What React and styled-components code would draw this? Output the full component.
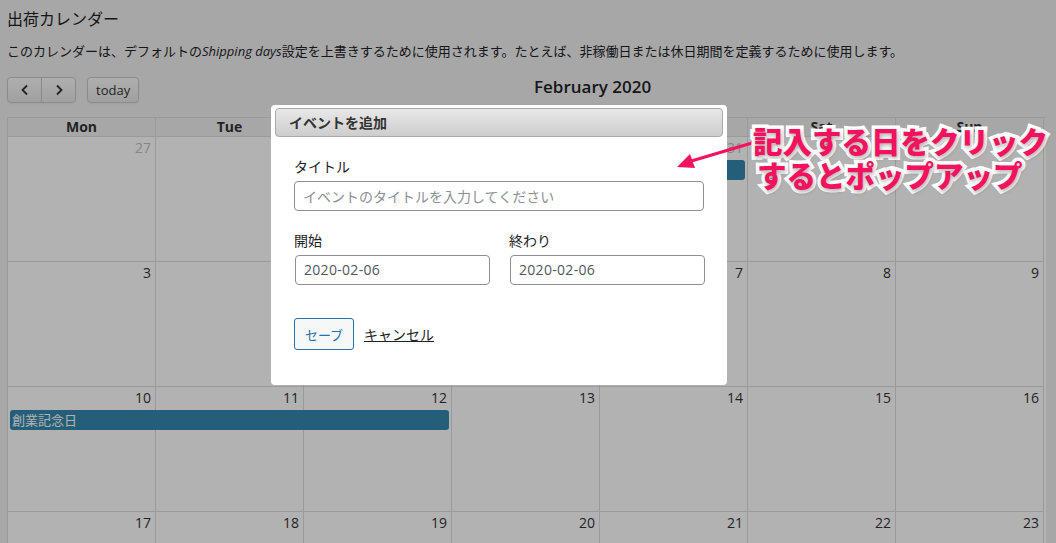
import styled, { createGlobalStyle } from "styled-components";

const GlobalStyle = createGlobalStyle`
  html, body {
    margin: 0;
    padding: 0;
    background: #f0f0f0;
    font-family: "Open Sans", "Noto Sans CJK JP", sans-serif;
    color: #1d2327;
  }
`;

const Page = styled.div`
  position: relative;
  width: 1056px;
  height: 543px;
  overflow: hidden;
  padding: 0 10px 0 7px;
  box-sizing: border-box;
`;

const Heading = styled.h1`
  margin: 0;
  padding-top: 7px;
  font-size: 16px;
  font-weight: 400;
  line-height: 22px;
  font-family: "Noto Sans CJK JP", sans-serif;
`;

const Intro = styled.p`
  margin: 12px 0 0;
  font-size: 13px;
  line-height: 20px;
  font-family: "Noto Sans CJK JP", sans-serif;

  em {
    font-family: "Open Sans", sans-serif;
    font-style: italic;
  }
`;

const Toolbar = styled.div`
  display: flex;
  align-items: center;
  margin-top: 16px;
  height: 26px;
`;

const ButtonGroup = styled.div`
  display: flex;
  margin-right: 11px;
`;

const ToolButton = styled.button`
  height: 26px;
  min-width: ${(p) => (p.$wide ? "51px" : "35px")};
  padding: 0 8px;
  display: flex;
  align-items: center;
  justify-content: center;
  font-family: "Open Sans", sans-serif;
  font-size: 13px;
  color: #333;
  background: linear-gradient(#fafafa, #e6e6e6);
  border: 1px solid #c8c8c8;
  border-radius: ${(p) => p.$radius || "4px"};
  margin-left: ${(p) => (p.$joined ? "-1px" : "0")};
  box-shadow: inset 0 1px 0 rgba(255, 255, 255, 0.4), 0 1px 2px rgba(0, 0, 0, 0.05);
`;

const MonthTitle = styled.h2`
  flex: 1;
  margin: 0;
  text-align: center;
  font-size: 17px;
  font-weight: 600;
  color: #1d2327;
  margin-top: -7px;
`;

const Calendar = styled.div`
  margin-top: 14px;
  width: 1038px;
  border-left: 1px solid #ddd;
  border-top: 1px solid #ddd;
`;

const HeaderRow = styled.div`
  display: grid;
  grid-template-columns: repeat(7, 148px);
  height: 19px;
`;

const HeaderCell = styled.div`
  border-right: 1px solid #ddd;
  border-bottom: 1px solid #ddd;
  text-align: center;
  font-size: 14px;
  font-weight: 700;
  line-height: 18px;
  color: #333;
`;

const WeekRow = styled.div`
  display: grid;
  grid-template-columns: repeat(7, 148px);
  grid-template-rows: 23px 20px 1fr;
  height: 125px;
  background: #fff;
`;

const DayCell = styled.div`
  grid-row: 1 / -1;
  grid-column: ${(p) => p.$col};
  border-right: 1px solid #ddd;
  border-bottom: 1px solid #ddd;
  text-align: right;
  padding: 1px 4px 0 0;
  font-size: 14px;
  line-height: 20px;
  color: ${(p) => (p.$other ? "#c2c2c2" : "#333")};
`;

const EventBar = styled.div`
  grid-row: 2;
  grid-column: ${(p) => p.$start} / span ${(p) => p.$span};
  margin: 0 3px 0 2px;
  background: #3687ac;
  border-radius: 3px;
  color: #fff;
  font-size: 13px;
  line-height: 19px;
  padding-left: 2px;
  z-index: 1;
  font-family: "Noto Sans CJK JP", sans-serif;
  white-space: nowrap;
  overflow: hidden;
`;

const Shade = styled.div`
  position: absolute;
  inset: 0;
  background: rgba(0, 0, 0, 0.3);
  z-index: 10;
`;

const Modal = styled.div`
  position: absolute;
  left: 271px;
  top: 105px;
  width: 456px;
  height: 280px;
  box-sizing: border-box;
  background: #fff;
  border-radius: 4px;
  padding: 3px 4px;
  z-index: 20;
  font-family: "Noto Sans CJK JP", sans-serif;
`;

const ModalBar = styled.div`
  height: 29px;
  box-sizing: border-box;
  border: 1px solid #aaa;
  border-radius: 4px;
  background: linear-gradient(#e8e8e8, #cdcdcd);
  padding-left: 13px;
  font-size: 14px;
  font-weight: 700;
  line-height: 27px;
  color: #333;
`;

const ModalBody = styled.div`
  padding: 19px 19px 0;
`;

const Label = styled.label`
  display: block;
  font-size: 14px;
  line-height: 20px;
  color: #1d2327;
`;

const TextInput = styled.div`
  box-sizing: border-box;
  width: ${(p) => p.$width || "410px"};
  height: 30px;
  margin-top: 5px;
  margin-left: ${(p) => p.$inset || "0"};
  border: 1px solid #8c8f94;
  border-radius: 4px;
  padding: 0 8px;
  font-size: 14px;
  line-height: 28px;
  color: ${(p) => (p.$placeholder ? "#8c8f94" : "#50575e")};
  font-family: ${(p) =>
    p.$placeholder ? '"Noto Sans CJK JP", sans-serif' : '"Open Sans", sans-serif'};
  letter-spacing: ${(p) => (p.$placeholder ? "0" : "0.3px")};
`;

const DateGrid = styled.div`
  display: grid;
  grid-template-columns: 195px 195px;
  column-gap: 20px;
  margin-top: 19px;
`;

const Actions = styled.div`
  display: flex;
  align-items: center;
  gap: 10px;
  margin-top: 33px;
`;

const SaveButton = styled.button`
  height: 32px;
  width: 60px;
  border: 1px solid #2271b1;
  border-radius: 3px;
  background: #f6f7f7;
  color: #2271b1;
  font-size: 13px;
  font-family: "Noto Sans CJK JP", sans-serif;
`;

const CancelLink = styled.a`
  color: #1d2327;
  font-size: 14px;
  text-decoration: underline;
`;

const Callout = styled.div`
  position: absolute;
  left: 753px;
  top: 123px;
  z-index: 30;
  font-family: "Noto Sans CJK JP", sans-serif;
  font-size: 29.5px;
  font-weight: 900;
  line-height: 34px;
  color: #f2125e;
  -webkit-text-stroke: 7px #fff;
  paint-order: stroke fill;
  text-shadow: 1px 2px 4px rgba(0, 0, 0, 0.35);
  white-space: nowrap;
`;

const CalloutLine = styled.div`
  padding-left: ${(p) => p.$indent || "0"};
`;

const Arrow = styled.svg`
  position: absolute;
  left: 670px;
  top: 135px;
  z-index: 30;
`;

const Chevron = ({ dir }) => (
  <svg width="10" height="12" viewBox="0 0 10 12">
    <polyline
      points={dir === "left" ? "7,1.5 2.5,6 7,10.5" : "3,1.5 7.5,6 3,10.5"}
      fill="none"
      stroke="#333"
      strokeWidth="1.8"
    />
  </svg>
);

const dayNames = ["Mon", "Tue", "Wed", "Thu", "Fri", "Sat", "Sun"];

const weeks = [
  {
    days: [27, 28, 29, 30, 31, 1, 2],
    other: [true, true, true, true, true, false, false],
    events: [{ start: 3, span: 3, title: "棚卸し" }],
  },
  { days: [3, 4, 5, 6, 7, 8, 9], events: [] },
  { days: [10, 11, 12, 13, 14, 15, 16], events: [{ start: 1, span: 3, title: "創業記念日" }] },
  { days: [17, 18, 19, 20, 21, 22, 23], events: [] },
];

const App = () => {
  return (
    <Page>
      <GlobalStyle />
      <Heading>出荷カレンダー</Heading>
      <Intro>
        このカレンダーは、デフォルトの<em>Shipping days</em>
        設定を上書きするために使用されます。たとえば、非稼働日または休日期間を定義するために使用します。
      </Intro>

      <Toolbar>
        <ButtonGroup>
          <ToolButton $radius="4px 0 0 4px">
            <Chevron dir="left" />
          </ToolButton>
          <ToolButton $radius="0 4px 4px 0" $joined>
            <Chevron dir="right" />
          </ToolButton>
        </ButtonGroup>
        <ToolButton $wide>today</ToolButton>
        <MonthTitle>February 2020</MonthTitle>
      </Toolbar>

      <Calendar>
        <HeaderRow>
          {dayNames.map((d) => (
            <HeaderCell key={d}>{d}</HeaderCell>
          ))}
        </HeaderRow>
        {weeks.map((w, wi) => (
          <WeekRow key={wi}>
            {w.days.map((d, i) => (
              <DayCell key={d} $col={i + 1} $other={w.other && w.other[i]}>
                {d}
              </DayCell>
            ))}
            {w.events.map((e) => (
              <EventBar key={e.title} $start={e.start} $span={e.span}>
                {e.title}
              </EventBar>
            ))}
          </WeekRow>
        ))}
      </Calendar>

      <Shade />

      <Modal>
        <ModalBar>イベントを追加</ModalBar>
        <ModalBody>
          <Label>タイトル</Label>
          <TextInput $placeholder>イベントのタイトルを入力してください</TextInput>
          <DateGrid>
            <div>
              <Label>開始</Label>
              <TextInput $width="195px" $inset="1px">2020-02-06</TextInput>
            </div>
            <div>
              <Label>終わり</Label>
              <TextInput $width="195px" $inset="1px">2020-02-06</TextInput>
            </div>
          </DateGrid>
          <Actions>
            <SaveButton>セーブ</SaveButton>
            <CancelLink>キャンセル</CancelLink>
          </Actions>
        </ModalBody>
      </Modal>

      <Arrow width="90" height="40" viewBox="0 0 90 40">
        <line x1="82" y1="8" x2="18" y2="27" stroke="#f2125e" strokeWidth="3" strokeLinecap="round" />
        <polygon points="7,32 20,19 25,33" fill="#f2125e" />
      </Arrow>

      <Callout>
        <CalloutLine>記入する日をクリック</CalloutLine>
        <CalloutLine $indent="4px">するとポップアップ</CalloutLine>
      </Callout>
    </Page>
  );
};

export default App;
